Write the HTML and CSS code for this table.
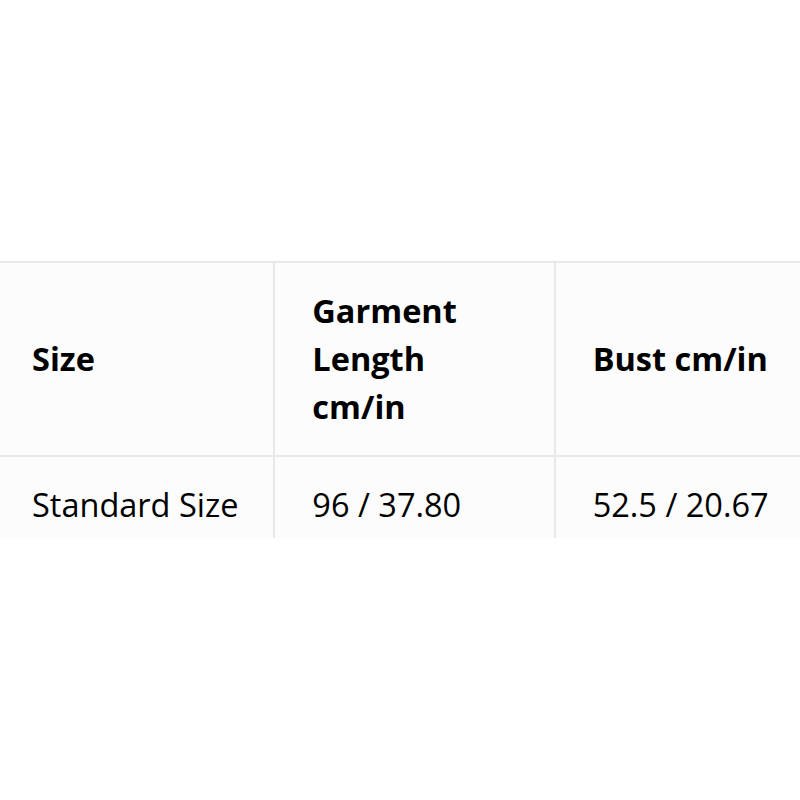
FILE: index.html
```html
<!DOCTYPE html>
<html>
<head>
<meta charset="utf-8">
<link rel="stylesheet" href="styles.css">
</head>
<body>
<div class="frame">
  <table class="size-table">
    <tr>
      <th>Size</th>
      <th>Garment Length cm/in</th>
      <th>Bust cm/in</th>
    </tr>
    <tr>
      <td>Standard Size</td>
      <td>96 / 37.80</td>
      <td>52.5 / 20.67</td>
    </tr>
  </table>
</div>
</body>
</html>
```
FILE: styles.css
```css
html, body {
  margin: 0;
  padding: 0;
  background: #ffffff;
}
.frame {
  margin-top: 261px;
  margin-left: -7px;
  height: 277px;
  overflow: hidden;
}
.size-table {
  border-collapse: collapse;
  font-family: "Open Sans", "Noto Sans", sans-serif;
  font-size: 32.5px;
  line-height: 48px;
  color: #000;
  table-layout: fixed;
  width: 843px;
}
.size-table th,
.size-table td {
  width: 280px;
  box-sizing: border-box;
  border: 2px solid #e8e8e8;
  background: #fcfcfc;
  padding: 24px 37px;
  text-align: left;
  vertical-align: middle;
}
.size-table th {
  font-weight: 700;
}
.size-table td {
  font-weight: 400;
  white-space: nowrap;
}
```
